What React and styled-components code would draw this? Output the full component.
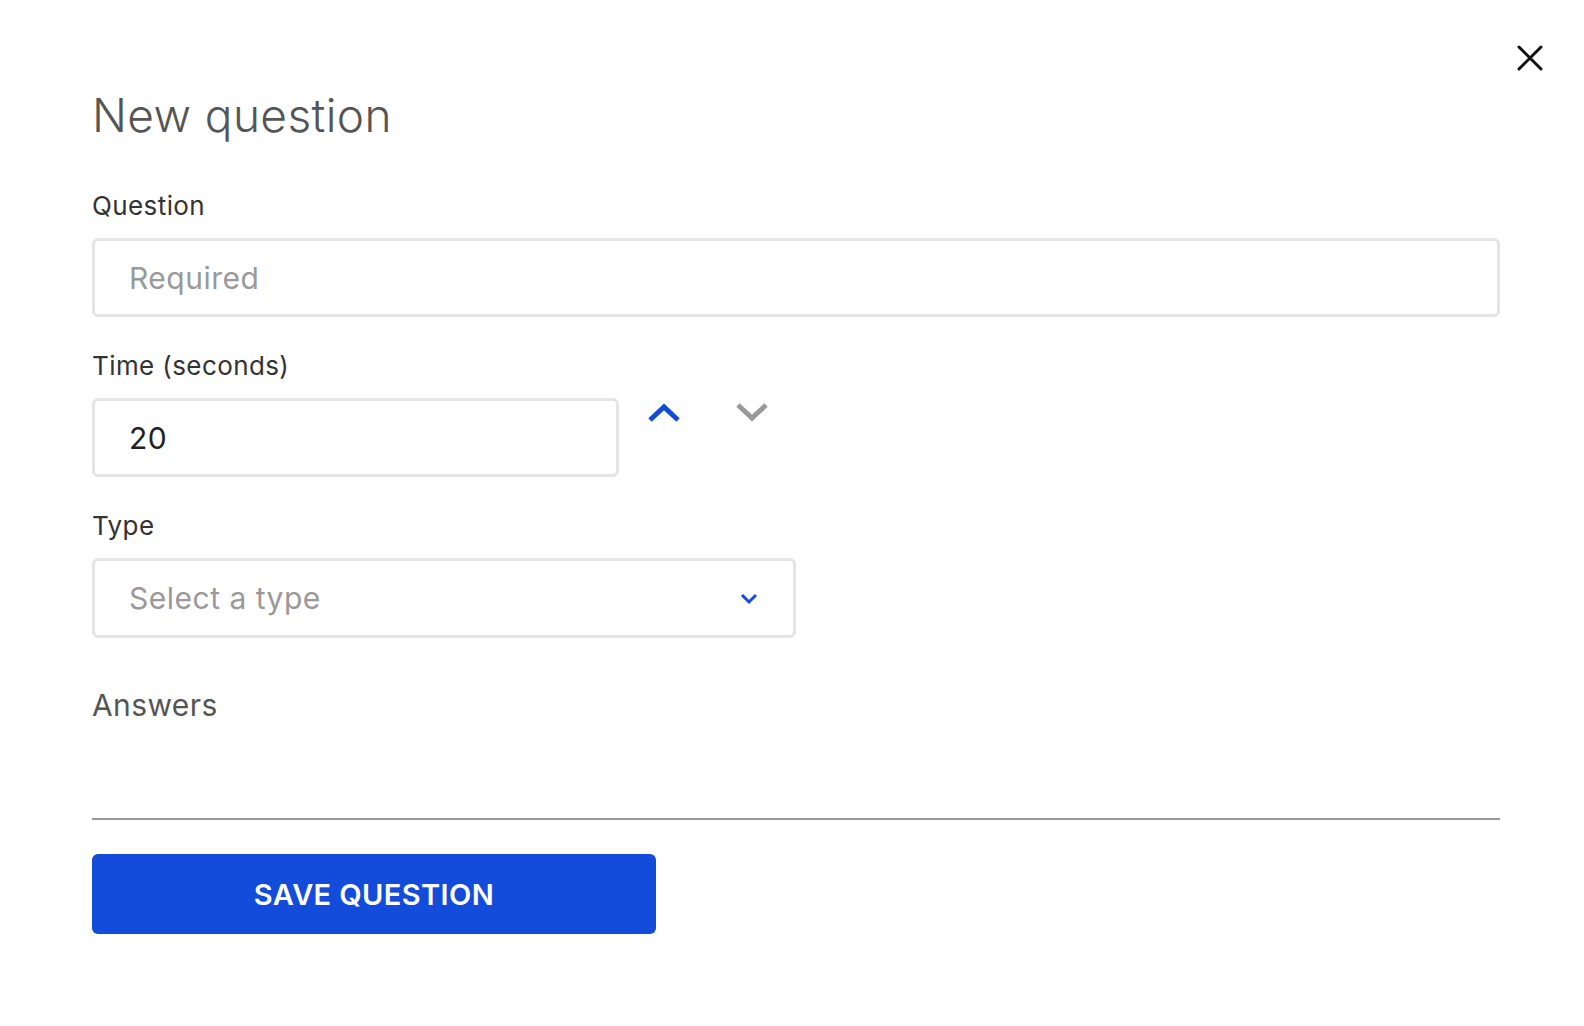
import React from 'react'
import styled, { createGlobalStyle } from 'styled-components'

const GlobalStyle = createGlobalStyle`
  html, body {
    margin: 0;
    padding: 0;
    background: #fff;
    overflow: hidden;
    font-family: Inter, "Noto Sans", sans-serif;
  }
`

const Modal = styled.div`
  position: relative;
  box-sizing: border-box;
  width: 100%;
  height: 100vh;
  padding: 85px 84px 0 92px;
`

const CloseButton = styled.button`
  position: absolute;
  top: 40px;
  right: 36px;
  width: 36px;
  height: 36px;
  padding: 0;
  border: none;
  background: none;
  display: flex;
  align-items: center;
  justify-content: center;
  cursor: pointer;
`

const Title = styled.h1`
  margin: 0 0 45px;
  font-size: 46px;
  font-weight: 300;
  line-height: 60px;
  color: #555;
  letter-spacing: 0.4px;
`

const Field = styled.div`
  display: flex;
  flex-direction: column;
  margin-bottom: 33px;
`

const Label = styled.label`
  font-size: 26px;
  line-height: 32px;
  color: #333;
  margin-bottom: 16px;
  letter-spacing: 0.4px;
`

const Row = styled.div`
  display: flex;
  align-items: flex-start;
`

const Input = styled.input`
  box-sizing: border-box;
  width: ${p => p.$width || '100%'};
  height: 79px;
  border: 3px solid #e5e5e5;
  border-radius: 6px;
  padding: 0 34px;
  font-family: inherit;
  font-size: 30px;
  color: #222;
  outline: none;
  letter-spacing: 0.5px;

  &::placeholder {
    color: #999;
  }
`

const Stepper = styled.div`
  display: flex;
  gap: 54px;
  margin-left: 28px;
  padding-top: 2px;
`

const StepButton = styled.button`
  border: none;
  background: none;
  padding: 0;
  width: 34px;
  height: 26px;
  display: flex;
  align-items: center;
  justify-content: center;
  cursor: pointer;
`

const SelectBox = styled.div`
  box-sizing: border-box;
  width: 704px;
  height: 80px;
  border: 3px solid #e5e5e5;
  border-radius: 6px;
  padding: 0 34px;
  display: flex;
  align-items: center;
  justify-content: space-between;
  font-size: 30px;
  color: #999;
  letter-spacing: 0.5px;
`

const SectionTitle = styled.h2`
  margin: 49px 0 0;
  font-size: 30px;
  font-weight: 400;
  line-height: 36px;
  color: #555;
  letter-spacing: 0.4px;
`

const Divider = styled.hr`
  margin: 95px 0 34px;
  border: none;
  border-top: 2px solid #999;
`

const SaveButton = styled.button`
  width: 564px;
  height: 80px;
  border: none;
  border-radius: 6px;
  background: #134cdb;
  color: #fff;
  font-family: inherit;
  font-size: 29px;
  font-weight: 600;
  letter-spacing: 0.4px;
  cursor: pointer;
`

export default function App() {
  return (
    <Modal>
      <GlobalStyle />
      <CloseButton aria-label="Close">
        <svg width="26" height="26" viewBox="0 0 26 26">
          <path d="M2 2 L24 24 M24 2 L2 24" stroke="#111" strokeWidth="3" strokeLinecap="round" />
        </svg>
      </CloseButton>
      <Title>New question</Title>

      <Field>
        <Label>Question</Label>
        <Input placeholder="Required" />
      </Field>

      <Field>
        <Label>Time (seconds)</Label>
        <Row>
          <Input $width="527px" defaultValue="20" />
          <Stepper>
            <StepButton aria-label="Increase">
              <svg width="34" height="22" viewBox="0 0 34 22">
                <polyline points="3,18 17,5 31,18" fill="none" stroke="#134cdb" strokeWidth="5" />
              </svg>
            </StepButton>
            <StepButton aria-label="Decrease">
              <svg width="34" height="22" viewBox="0 0 34 22">
                <polyline points="3,3 17,16 31,3" fill="none" stroke="#999" strokeWidth="5" />
              </svg>
            </StepButton>
          </Stepper>
        </Row>
      </Field>

      <Field>
        <Label>Type</Label>
        <SelectBox>
          <span>Select a type</span>
          <svg width="20" height="14" viewBox="0 0 20 14">
            <polyline points="3,4 10,11 17,4" fill="none" stroke="#134cdb" strokeWidth="3" />
          </svg>
        </SelectBox>
      </Field>

      <SectionTitle>Answers</SectionTitle>
      <Divider />
      <SaveButton>SAVE QUESTION</SaveButton>
    </Modal>
  )
}
